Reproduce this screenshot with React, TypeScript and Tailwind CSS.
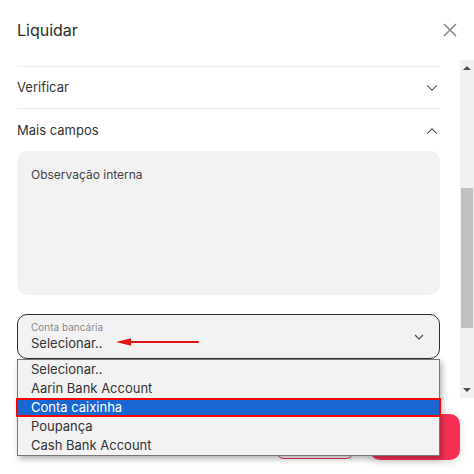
import { ChevronDown, ChevronUp } from 'lucide-react';

const options = ['Selecionar..', 'Aarin Bank Account', 'Conta caixinha', 'Poupança', 'Cash Bank Account'];

const App = () => {
  return (
    <div className="relative w-[474px] h-[474px] overflow-hidden bg-white text-[#333] font-['Inter','Noto_Sans',sans-serif]">
      {/* header */}
      <div className="flex h-[60px] items-center justify-between pl-[17px] pr-[16px]">
        <h2 className="text-[16px] text-[#2b2b2b]">Liquidar</h2>
        <svg width="16" height="16" viewBox="0 0 16 16" className="text-[#8a8a8a]">
          <path d="M2 2 L14 14 M14 2 L2 14" stroke="currentColor" strokeWidth="1.6" fill="none" />
        </svg>
      </div>

      {/* scroll area */}
      <div className="flex h-[338px]">
        <div className="flex-1 pl-[17px] pr-[20px] pt-[6px]">
          <div className="flex h-[42px] items-center justify-between border-t border-[#ececec] text-[13px] text-[#333]">
            <span>Verificar</span>
            <ChevronDown size={18} strokeWidth={1.4} className="mr-[-1px] text-[#333]" />
          </div>
          <div className="flex h-[43px] items-center justify-between border-t border-[#ececec] pt-[2px] text-[13px] text-[#333]">
            <span>Mais campos</span>
            <ChevronUp size={18} strokeWidth={1.4} className="mr-[-1px] text-[#333]" />
          </div>
          <div className="h-[144px] rounded-[10px] bg-[#f2f2f2] px-[14px] pt-[15px] text-[12px] text-[#444]">
            Observação interna
          </div>
          <div className="relative mt-[19px] h-[45px] rounded-[10px] border border-[#2e2e2e] bg-[#f2f2f2] pl-[13px]">
            <div className="pt-[6px] text-[10px] leading-[13px] text-[#8a8a8a]">Conta bancária</div>
            <div className="text-[13px] leading-[18px] text-[#333]">Selecionar..</div>
            <svg width="10" height="6" viewBox="0 0 10 6" className="absolute right-[15px] top-[19px] text-[#555]">
              <path d="M1 1 L5 5 L9 1" stroke="currentColor" strokeWidth="1.3" fill="none" />
            </svg>
            <svg width="86" height="10" viewBox="0 0 86 10" className="absolute left-[98px] top-[22px]">
              <path d="M12 5 L82 5" stroke="#e11414" strokeWidth="2.2" strokeLinecap="round" />
              <path d="M0 5 L15 1.2 L15 8.8 Z" fill="#e11414" />
            </svg>
          </div>
        </div>
        {/* scrollbar */}
        <div className="flex w-[14px] flex-col items-center bg-[#f1f1f1]">
          <div className="flex h-[16px] items-center justify-center">
            <div className="h-0 w-0 border-x-[4px] border-b-[4px] border-x-transparent border-b-[#505050]" />
          </div>
          <div className="mt-[112px] h-[140px] w-[12px] bg-[#c1c1c1]" />
          <div className="flex-1" />
          <div className="flex h-[16px] items-center justify-center">
            <div className="h-0 w-0 border-x-[4px] border-t-[4px] border-x-transparent border-t-[#505050]" />
          </div>
        </div>
      </div>

      {/* footer buttons */}
      <div className="flex justify-end gap-[16px] pr-[14px] pt-[16px]">
        <button className="mt-[1px] h-[44px] w-[78px] rounded-[8px] border border-[#e5395c] bg-white" />
        <button className="h-[46px] w-[90px] rounded-[10px] bg-[#f72f55] shadow-[0_2px_8px_rgba(0,0,0,0.15)]" />
      </div>

      {/* native dropdown list */}
      <div className="absolute left-[17px] top-[359px] w-[423px] border border-[#777] bg-[#f2f2f2] shadow-[2px_3px_6px_rgba(0,0,0,0.3)]">
        {options.map((o) => (
          <div
            key={o}
            className={
              o === 'Conta caixinha'
                ? 'mx-[-2px] flex h-[19px] items-center border-[2px] border-[#ff0000] bg-[#1967d2] pl-[13px] text-[13px] text-white'
                : 'flex h-[19px] items-center pl-[13px] text-[13px] text-[#333]'
            }
          >
            {o}
          </div>
        ))}
      </div>
    </div>
  );
};

export default App;
